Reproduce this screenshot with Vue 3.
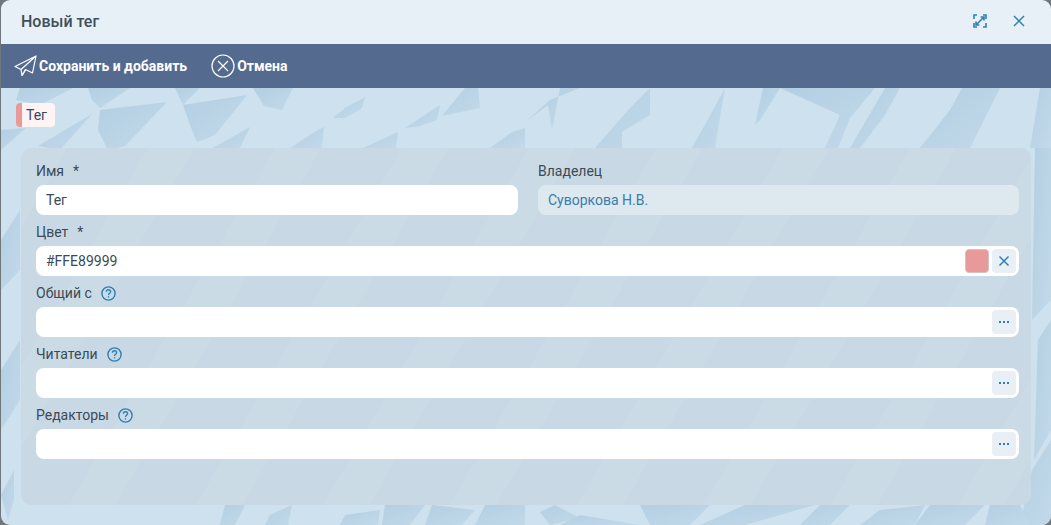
<script setup>
const sharedFields = [
  { label: "Общий с" },
  { label: "Читатели" },
  { label: "Редакторы" },
];

// пятна текстуры фона, координаты страницы
const shapes = [
  "20,88 73,88 40,105 16,100",
  "1,130 26,128 1,150",
  "88,88 130,88 100,108 92,100",
  "100,110 167,102 125,146 108,150 98,130",
  "38,146 92,114 60,150",
  "175,88 200,88 183,105",
  "183,105 247,95 215,135 197,142 190,125",
  "253,88 293,88 282,110 264,106",
  "213,148 250,127 240,148",
  "333,118 345,108 365,97 362,108 345,118",
  "290,148 318,130 324,127 322,148",
  "405,128 440,105 437,120 420,126",
  "363,148 398,132 396,148",
  "442,116 465,88 478,88 480,108",
  "490,148 512,132 525,128 525,148",
  "525,122 548,105 552,130 560,88 580,88 550,100",
  "595,148 630,108 650,88 650,115 622,132 622,148",
  "692,148 712,112 725,88 722,105 715,148",
  "763,88 780,88 760,120 755,125",
  "780,88 875,88 850,118 838,148 825,148 840,115",
  "885,88 900,88 885,115 860,148 850,148",
  "962,88 1000,88 970,148 920,148 950,110",
  "1040,88 1051,88 1051,148 1030,148",
  "1035,148 1051,148 1051,300 1032,320",
  "1038,340 1051,320 1051,430 1034,460",
  "1032,470 1051,440 1051,525 1020,525",
  "225,505 245,505 235,525 220,525",
  "270,515 292,505 288,525 265,525",
  "345,515 380,510 378,525 340,525",
  "385,505 425,505 410,525 382,525",
  "432,505 475,510 462,525 425,525",
  "485,505 525,505 525,525 475,525",
  "555,505 580,518 550,525 540,512",
  "560,525 580,515 640,525",
  "640,505 710,505 690,525 650,525",
  "745,505 815,505 745,525 700,525",
  "820,505 850,505 830,525 800,525",
  "860,525 880,510 925,505 915,525",
  "930,505 985,505 965,525 915,525",
  "990,505 1020,505 1030,525 985,525",
  "1,495 14,470 14,500 8,520",
  "1,240 20,210 20,270 1,290",
  "1,370 20,340 20,400 1,430",
];
</script>

<template>
  <div class="window">
    <div class="header">
      <span class="title">Новый тег</span>
      <div class="header-icons">
        <svg class="head-icon" viewBox="0 0 14 14" fill="none" stroke="#2f80b5" stroke-width="1.6">
          <path d="M1 5V1h3M13 9v4h-3M1 9v4h3M13 5V1h-3" />
          <path d="M3.5 10.5l7-7M7.6 3h3.4v3.4M6.4 11H3V7.6" />
        </svg>
        <svg class="head-icon" viewBox="0 0 14 14" fill="none" stroke="#2f80b5" stroke-width="1.5">
          <path d="M2 2l10 10M12 2 2 12" />
        </svg>
      </div>
    </div>

    <div class="toolbar">
      <button class="tool">
        <svg width="23" height="22" viewBox="0 0 23 22" fill="none" stroke="#fff" stroke-width="1.2" stroke-linejoin="round">
          <path d="M22 1 1 11.5l6 3L22 1l-3.5 17-7-3.5L8 20.5l-1-6" />
          <path d="M11.5 15 8 20.5" />
        </svg>
        <span>Сохранить и добавить</span>
      </button>
      <button class="tool">
        <svg width="24" height="24" viewBox="0 0 24 24" fill="none" stroke="#fff" stroke-width="1.2">
          <circle cx="12" cy="12" r="11" />
          <path d="M7 7l10 10M17 7 7 17" />
        </svg>
        <span>Отмена</span>
      </button>
    </div>

    <div class="content">
      <svg class="texture" viewBox="0 88 1051 437" preserveAspectRatio="none">
        <defs>
          <linearGradient id="shade" x1="0" y1="0" x2="1" y2="1">
            <stop offset="0" stop-color="#b3cfe3" />
            <stop offset="1" stop-color="#c2d9e9" />
          </linearGradient>
        </defs>
        <polygon v-for="(p, i) in shapes" :key="i" :points="p" fill="url(#shade)" />
      </svg>

      <div class="chip"><i class="chip-bar"></i><span>Тег</span></div>

      <div class="panel">
        <div class="row-two">
          <div class="field">
            <label>Имя<span class="req">*</span></label>
            <div class="input"><span>Тег</span></div>
          </div>
          <div class="field">
            <label>Владелец</label>
            <div class="input input-readonly"><span>Суворкова Н.В.</span></div>
          </div>
        </div>

        <div class="field">
          <label>Цвет<span class="req">*</span></label>
          <div class="input">
            <span class="grow">#FFE89999</span>
            <i class="swatch"></i>
            <button class="mini">
              <svg width="12" height="12" viewBox="0 0 12 12" fill="none" stroke="#2f80b5" stroke-width="1.5">
                <path d="M1.5 1.5l9 9M10.5 1.5l-9 9" />
              </svg>
            </button>
          </div>
        </div>

        <div class="field" v-for="f in sharedFields" :key="f.label">
          <label>
            {{ f.label }}
            <svg class="help" width="15" height="15" viewBox="0 0 15 15" fill="none" stroke="#2f7fb3">
              <circle cx="7.5" cy="7.5" r="6.6" stroke-width="1.4" />
              <path d="M5.4 5.8c0-1.3 1-2 2.1-2s2.1.7 2.1 1.9c0 1.6-2.1 1.6-2.1 3.2" stroke-width="1.4" />
              <path d="M7.5 10.2v1.3" stroke-width="1.4" />
            </svg>
          </label>
          <div class="input">
            <span class="grow"></span>
            <button class="mini">
              <svg width="12" height="4" viewBox="0 0 12 4" fill="#2f80b5">
                <rect x="1" y="1" width="2" height="2" />
                <rect x="5" y="1" width="2" height="2" />
                <rect x="9" y="1" width="2" height="2" />
              </svg>
            </button>
          </div>
        </div>
      </div>
    </div>
  </div>
</template>

<style>
html,
body {
  margin: 0;
  background: #6f777c;
  overflow: hidden;
}
</style>

<style scoped>
.window {
  margin-left: 1px;
  width: 1050px;
  height: 525px;
  border-radius: 9px;
  overflow: hidden;
  display: flex;
  flex-direction: column;
  font-family: Roboto, "Liberation Sans", sans-serif;
  font-size: 14px;
  color: #3c4a55;
}

.header {
  height: 44px;
  flex: none;
  background: #e6f0f6;
  display: flex;
  align-items: center;
  justify-content: space-between;
  padding: 0 25px 2px 20px;
  box-sizing: border-box;
}

.title {
  font-size: 16px;
  font-weight: 500;
  color: #3f4e59;
}

.header-icons {
  display: flex;
  gap: 25px;
  align-items: center;
}

.head-icon {
  width: 14px;
  height: 14px;
  display: block;
}

.toolbar {
  height: 44px;
  flex: none;
  background: #546b8f;
  display: flex;
  align-items: center;
  padding-left: 13px;
  gap: 24px;
}

.tool {
  display: flex;
  align-items: center;
  gap: 2px;
  padding: 0;
  border: none;
  background: none;
  color: #fff;
  font: bold 14px Roboto, "Liberation Sans", sans-serif;
}

.content {
  position: relative;
  flex: 1;
  background: #cde2ee;
  padding: 15px 20px 20px 15px;
  display: flex;
  flex-direction: column;
  align-items: flex-start;
}

.texture {
  position: absolute;
  left: -1px;
  top: 0;
  width: 1051px;
  height: 437px;
  filter: blur(0.6px);
}

.chip {
  position: relative;
  height: 24px;
  width: 39px;
  box-sizing: border-box;
  display: flex;
  align-items: center;
  background: #fff3f3;
  border-radius: 4px;
  overflow: hidden;
  margin-bottom: 21px;
  color: #34495e;
}

.chip-bar {
  width: 6px;
  height: 100%;
  background: #e89999;
  margin-right: 4px;
}

.panel {
  position: relative;
  align-self: stretch;
  margin-left: 5px;
  flex: 1;
  background: #c8d9e5;
  background-image: repeating-linear-gradient(120deg, rgba(255, 255, 255, 0.05) 0 40px, rgba(255, 255, 255, 0) 40px 110px);
  border-radius: 10px;
  padding: 6px 12px 0 15px;
  display: flex;
  flex-direction: column;
}

.row-two {
  display: grid;
  grid-template-columns: 482px 481px;
  column-gap: 20px;
}

.field label {
  display: flex;
  align-items: center;
  height: 20px;
  padding: 7px 0 4px;
  white-space: pre;
}

.req {
  margin-left: 9px;
}

.help {
  margin-left: 6px;
}

.input {
  height: 30px;
  box-sizing: border-box;
  background: #fff;
  border-radius: 8px;
  display: flex;
  align-items: center;
  padding: 0 3px 0 10px;
}

.input-readonly {
  background: #dde8ef;
  color: #3a7daa;
}

.grow {
  flex: 1;
}

.swatch {
  width: 24px;
  height: 24px;
  background: #e89999;
  border: 1px solid #d4c3c3;
  box-sizing: border-box;
  border-radius: 4px;
  margin-right: 3px;
}

.mini {
  width: 24px;
  height: 24px;
  padding: 0;
  border: none;
  border-radius: 4px;
  background: #e8f0f6;
  display: flex;
  align-items: center;
  justify-content: center;
}
</style>
